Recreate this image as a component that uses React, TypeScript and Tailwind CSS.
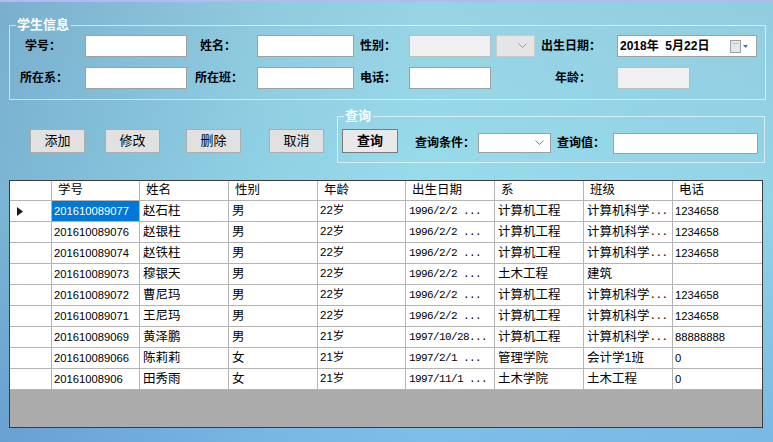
import React from "react";

const SANS = "font-['Liberation_Sans','Noto_Sans_CJK_SC',sans-serif]";

function GroupBox({
  title,
  className,
  children,
}: {
  title: string;
  className: string;
  children: React.ReactNode;
}) {
  return (
    <div className={`flex flex-col ${className}`}>
      <div className="flex h-[14px] items-start">
        <div className="h-[7px] w-[7px] self-end border-l border-t border-white/60" />
        <span className="pl-[1px] pr-[2px] text-[13px] font-bold leading-[14px] text-white">
          {title}
        </span>
        <div className="h-[7px] flex-1 self-end border-r border-t border-white/60" />
      </div>
      <div className="border-b border-l border-r border-white/60">{children}</div>
    </div>
  );
}

function Label({ text, cls }: { text: string; cls: string }) {
  return (
    <span className={`${cls} shrink-0 whitespace-nowrap text-[12px] font-bold leading-[22px] text-black`}>
      {text}
    </span>
  );
}

function TextBox({ cls, disabled }: { cls: string; disabled?: boolean }) {
  return (
    <div
      className={`${cls} h-[22px] shrink-0 border ${
        disabled ? "border-[#bcbcbc] bg-[#f0f0f0]" : "border-[#a0a0a0] bg-white"
      }`}
    />
  );
}

function Chevron({ color }: { color: string }) {
  return (
    <svg width="9" height="6" viewBox="0 0 9 6">
      <polyline points="0.5,0.5 4.5,4.5 8.5,0.5" fill="none" stroke={color} strokeWidth="1" />
    </svg>
  );
}

function Button({ text, cls, bold }: { text: string; cls: string; bold?: boolean }) {
  return (
    <div
      className={`${cls} flex h-[24px] shrink-0 items-center justify-center border text-[13px] text-black ${
        bold ? "border-[#7a7a7a] bg-[#e9e9e9] font-bold" : "border-[#adadad] bg-[#e1e1e1]"
      }`}
    >
      {text}
    </div>
  );
}

const widths = [
  "w-[42px]",
  "w-[88px]",
  "w-[89px]",
  "w-[89px]",
  "w-[88px]",
  "w-[89px]",
  "w-[89px]",
  "w-[89px]",
  "w-[89px]",
];

const headers = ["", "学号", "姓名", "性别", "年龄", "出生日期", "系", "班级", "电话"];

const cellCls = [
  "",
  "pl-[2px] text-[11.25px] font-['Liberation_Sans',sans-serif]",
  "pl-[3px] text-[12.5px]",
  "pl-[3px] text-[12.5px]",
  "pl-[2px] text-[11.5px]",
  "pl-[3px] text-[11px] tracking-[-0.6px] font-['Liberation_Mono','Noto_Sans_CJK_SC',monospace]",
  "pl-[3px] text-[12.5px]",
  "pl-[3px] text-[12.5px]",
  "pl-[2px] text-[11.25px] font-['Liberation_Sans',sans-serif]",
];

const rows = [
  ["201610089077", "赵石柱", "男", "22岁", "1996/2/2 ...", "计算机工程", "计算机科学...", "1234658"],
  ["201610089076", "赵银柱", "男", "22岁", "1996/2/2 ...", "计算机工程", "计算机科学...", "1234658"],
  ["201610089074", "赵铁柱", "男", "22岁", "1996/2/2 ...", "计算机工程", "计算机科学...", "1234658"],
  ["201610089073", "穆银天", "男", "22岁", "1996/2/2 ...", "土木工程", "建筑", ""],
  ["201610089072", "曹尼玛", "男", "22岁", "1996/2/2 ...", "计算机工程", "计算机科学...", "1234658"],
  ["201610089071", "王尼玛", "男", "22岁", "1996/2/2 ...", "计算机工程", "计算机科学...", "1234658"],
  ["201610089069", "黄泽鹏", "男", "21岁", "1997/10/28...", "计算机工程", "计算机科学...", "88888888"],
  ["201610089066", "陈莉莉", "女", "21岁", "1997/2/1 ...", "管理学院", "会计学1班", "0"],
  ["20161008906", "田秀雨", "女", "21岁", "1997/11/1 ...", "土木学院", "土木工程", "0"],
];

function CellText({ text }: { text: string }) {
  if (text.endsWith("...") && !/^\d/.test(text)) {
    return (
      <>
        {text.slice(0, -3)}
        <span className="text-[11px] tracking-[-0.6px] font-['Liberation_Mono',monospace]">...</span>
      </>
    );
  }
  return <>{text}</>;
}

function Grid() {
  return (
    <div className="ml-[9px] mt-[17px] flex h-[248px] w-[754px] flex-col overflow-hidden border border-[#3c3c3c] bg-[#ababab]">
      <div className="flex h-[20px] shrink-0 bg-white">
        {headers.map((h, i) => (
          <div
            key={i}
            className={`${widths[i]} flex h-full shrink-0 items-center border-b border-[#b4b4b4] pl-[6px] text-[12.5px] text-black ${
              i < 8 ? "border-r" : ""
            }`}
          >
            {h}
          </div>
        ))}
      </div>
      {rows.map((r, ri) => (
        <div key={ri} className="flex h-[21px] shrink-0">
          <div className="flex h-full w-[42px] shrink-0 items-center border-b border-r border-[#b4b4b4] bg-white pl-[7px]">
            {ri === 0 && (
              <svg width="6" height="9" viewBox="0 0 6 9">
                <polygon points="0,0 6,4.5 0,9" fill="#1a1a1a" />
              </svg>
            )}
          </div>
          {r.map((c, ci) => {
            const selected = ri === 0 && ci === 0;
            return (
              <div
                key={ci}
                className={`${widths[ci + 1]} ${cellCls[ci + 1]} flex h-full shrink-0 items-center overflow-hidden whitespace-nowrap border-b border-[#b4b4b4] ${
                  ci < 7 ? "border-r" : ""
                } ${selected ? "bg-[#0078d7] text-white" : "bg-white text-black"}`}
              >
                <CellText text={c} />
              </div>
            );
          })}
        </div>
      ))}
    </div>
  );
}

export default function App() {
  return (
    <div
      className={`${SANS} flex h-[442px] w-[773px] flex-col overflow-hidden bg-[linear-gradient(90deg,rgba(60,100,160,0.32)_0%,rgba(60,100,160,0.08)_35%,rgba(60,100,160,0)_55%,rgba(60,100,160,0.06)_100%),linear-gradient(180deg,#97d3e3_0%,#98dcec_45%,#86c8ea_80%,#7dbde9_100%)]`}
    >
      <div className="h-[2px] shrink-0 bg-[#b9b7f2]" />

      <GroupBox title="学生信息" className="ml-[9px] mt-[16px] w-[757px]">
        <div className="flex flex-col gap-[10px] pb-[10px] pt-[3px]">
          <div className="flex h-[22px] items-center">
            <Label text="学号：" cls="ml-[15px] w-[36px]" />
            <TextBox cls="ml-[24px] w-[102px]" />
            <Label text="姓名：" cls="ml-[13px] w-[36px]" />
            <TextBox cls="ml-[21px] w-[97px]" />
            <Label text="性别：" cls="ml-[6px] w-[36px]" />
            <TextBox cls="ml-[13px] w-[82px]" disabled />
            <div className="ml-[5px] flex h-[22px] w-[39px] shrink-0 items-center justify-end border border-[#cacaca] bg-[#e5e5e5] pr-[7px]">
              <Chevron color="#9a9a9a" />
            </div>
            <Label text="出生日期：" cls="ml-[6px] w-[60px]" />
            <div className="ml-[16px] flex h-[22px] w-[140px] shrink-0 items-center border border-[#a0a0a0] bg-white pl-[2px] pr-[6px]">
              <span className="flex-1 whitespace-pre text-[12px] font-bold text-black">2018年  5月22日</span>
              <svg width="20" height="13" viewBox="0 0 20 13">
                <rect x="0.5" y="0.5" width="10" height="12" fill="#e4e6ea" stroke="#9aa0a8" />
                <line x1="2.5" y1="3.5" x2="8.5" y2="3.5" stroke="#c0c4ca" />
                <polygon points="13,5 18,5 15.5,8" fill="#3f6fb0" />
              </svg>
            </div>
          </div>
          <div className="flex h-[22px] items-center">
            <Label text="所在系：" cls="ml-[10px] w-[48px]" />
            <TextBox cls="ml-[17px] w-[102px]" />
            <Label text="所在班：" cls="ml-[8px] w-[48px]" />
            <TextBox cls="ml-[14px] w-[97px]" />
            <Label text="电话：" cls="ml-[6px] w-[36px]" />
            <TextBox cls="ml-[13px] w-[82px]" />
            <Label text="年龄：" cls="ml-[64px] w-[36px]" />
            <TextBox cls="ml-[26px] w-[73px]" disabled />
          </div>
        </div>
      </GroupBox>

      <div className="mt-[9px] flex">
        <div className="flex pt-[20px]">
          <Button text="添加" cls="ml-[30px] w-[55px]" />
          <Button text="修改" cls="ml-[20px] w-[55px]" />
          <Button text="删除" cls="ml-[26px] w-[55px]" />
          <Button text="取消" cls="ml-[28px] w-[55px]" />
        </div>
        <GroupBox title="查询" className="ml-[13px] w-[428px]">
          <div className="flex items-start pb-[8px] pt-[6px]">
            <Button text="查询" cls="ml-[4px] w-[56px]" bold />
            <span className="ml-[17px] mt-[4px] w-[60px] shrink-0 whitespace-nowrap text-[12px] font-bold leading-[20px] text-black">
              查询条件：
            </span>
            <div className="ml-[3px] mt-[4px] flex h-[20px] w-[73px] shrink-0 items-center justify-end border border-[#a0a0a0] bg-white pr-[6px]">
              <Chevron color="#7a7a7a" />
            </div>
            <span className="ml-[6px] mt-[4px] w-[48px] shrink-0 whitespace-nowrap text-[12px] font-bold leading-[20px] text-black">
              查询值：
            </span>
            <div className="ml-[8px] mt-[4px] h-[21px] w-[145px] shrink-0 border border-[#a0a0a0] bg-white" />
          </div>
        </GroupBox>
      </div>

      <Grid />
    </div>
  );
}
